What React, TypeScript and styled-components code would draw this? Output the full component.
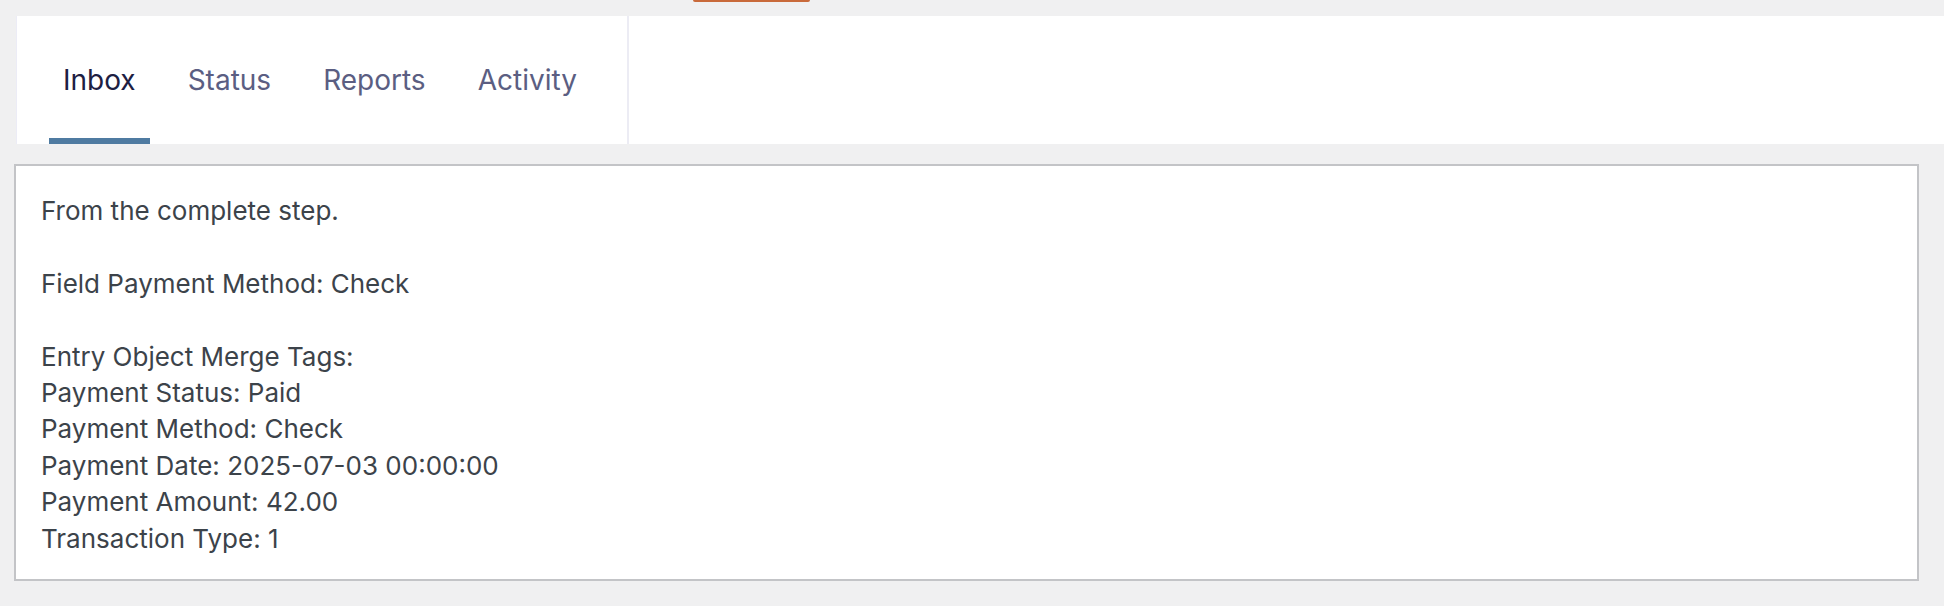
import React from "react";
import styled, { createGlobalStyle } from "styled-components";

const Global = createGlobalStyle`
  html, body { margin: 0; padding: 0; background: #f0f0f1; }
  body { font-family: Inter, "Noto Sans", "Liberation Sans", sans-serif; }
`;

const Page = styled.div`
  display: flex;
  flex-direction: column;
  min-height: 606px;
  background: #f0f0f1;
`;

const TopStrip = styled.div`
  height: 16px;
  display: flex;
  align-items: flex-start;
  padding-left: 693px;
`;

const Notice = styled.div`
  width: 117px;
  height: 2px;
  background: #c96a3b;
  border-radius: 0 0 3px 3px;
`;

const Header = styled.header`
  margin-left: 16px;
  height: 128px;
  background: #ffffff;
  border-left: 1px solid #ececf6;
  display: flex;
`;

const Tabs = styled.nav`
  width: 578px;
  padding-left: 32px;
  display: flex;
  gap: 24px;
  border-right: 2px solid #ececf4;
`;

const Tab = styled.a<{ $active?: boolean }>`
  display: flex;
  align-items: center;
  padding: 0 14px;
  font-size: 28px;
  font-weight: 400;
  letter-spacing: 0px;
  color: ${(p) => (p.$active ? "#1d2042" : "#5b5e82")};
  text-decoration: none;
  box-shadow: ${(p) => (p.$active ? "inset 0 -6px 0 #4f7ba1" : "none")};
  cursor: pointer;
`;

const Card = styled.section`
  margin: 20px 25px 0 14px;
  background: #ffffff;
  border: 2px solid #c3c4c7;
  padding: 27px 24px 22px 25px;
`;

const Body = styled.div`
  font-size: 26px;
  line-height: 36.4px;
  color: #3c434a;
  white-space: pre-line;
`;

const tabs = ["Inbox", "Status", "Reports", "Activity"];

const text = `From the complete step.

Field Payment Method: Check

Entry Object Merge Tags:
Payment Status: Paid
Payment Method: Check
Payment Date: 2025-07-03 00:00:00
Payment Amount: 42.00
Transaction Type: 1`;

export default function App() {
  return (
    <Page>
      <Global />
      <TopStrip>
        <Notice />
      </TopStrip>
      <Header>
        <Tabs>
          {tabs.map((t, i) => (
            <Tab key={t} $active={i === 0}>
              {t}
            </Tab>
          ))}
        </Tabs>
      </Header>
      <Card>
        <Body>{text}</Body>
      </Card>
    </Page>
  );
}
